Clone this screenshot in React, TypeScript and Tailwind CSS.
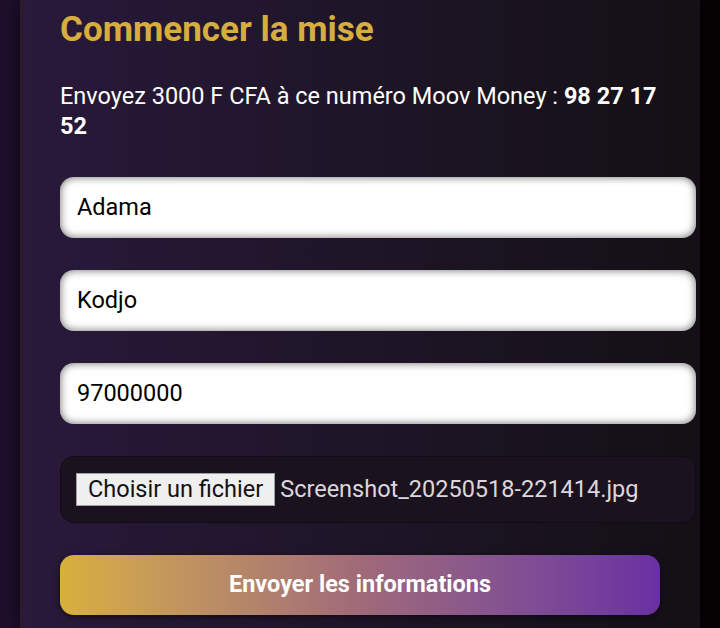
const FIELDS = ["Adama", "Kodjo", "97000000"];

const App = () => {
    return (
        <div className="w-[720px] h-[628px] overflow-hidden bg-gradient-to-r from-[#1f0f2e] via-[#150c1c] to-[#050304] font-['Roboto',sans-serif]">
            <div className="ml-[20px] w-[680px] h-full pl-[37px] pr-[40px] pt-[9px] bg-gradient-to-r from-[#29193b] to-[#141015] border-l-[3px] border-[#2f1a2c] shadow-[0_0_20px_rgba(0,0,0,0.6)]">
                <h2 className="text-[35px] leading-[42px] font-bold text-[#d6ad3e]">Commencer la mise</h2>
                <p className="mt-[30px] text-[23.5px] leading-[30px] text-white">
                    Envoyez 3000 F CFA à ce numéro Moov Money : <b className="font-bold">98 27 17 52</b>
                </p>
                <div className="mt-[36px] flex flex-col gap-[32px]">
                    {FIELDS.map((value) => (
                        <div
                            key={value}
                            className="w-[636px] h-[61px] flex items-center px-[17px] rounded-[14px] bg-white shadow-[inset_0_0_8px_rgba(0,0,0,0.6)] text-[23.5px] text-black"
                        >
                            {value}
                        </div>
                    ))}
                    <div className="w-[636px] h-[67px] flex items-center gap-[5px] px-[15px] rounded-[14px] bg-[#1a131f] border border-[#110c14] text-[23.5px]">
                        <span className="h-[33px] px-[11px] flex items-center bg-[#efefef] border border-[#a0a0a0] text-[#111]">
                            Choisir un fichier
                        </span>
                        <span className="text-[#ddd6dd]">Screenshot_20250518-221414.jpg</span>
                    </div>
                    <button className="w-[600px] h-[60px] rounded-[14px] bg-gradient-to-r from-[#d8b03a] via-[#a06a78] to-[#6a2fa3] text-white text-[23.5px] font-bold shadow-[0_2px_6px_rgba(0,0,0,0.5)]">
                        Envoyer les informations
                    </button>
                </div>
            </div>
        </div>
    );
};

export default App;
